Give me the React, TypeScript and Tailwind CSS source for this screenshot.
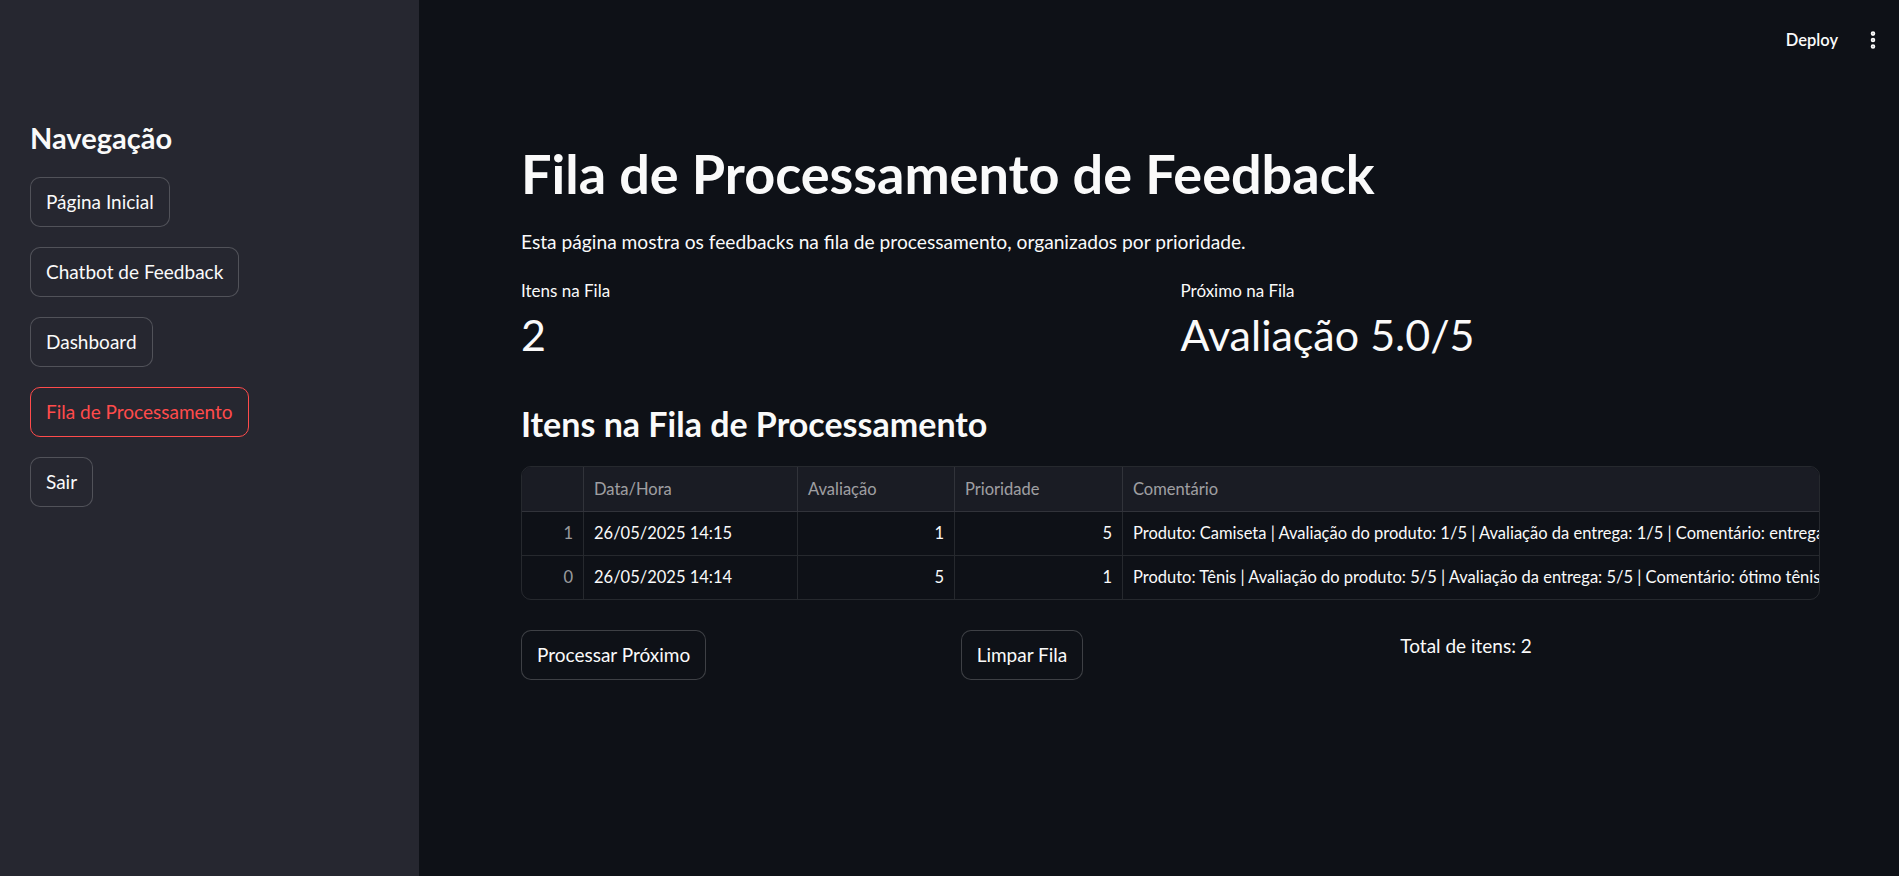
import { EllipsisVertical } from "lucide-react";

const navItems = ["Página Inicial", "Chatbot de Feedback", "Dashboard", "Fila de Processamento", "Sair"];

const rows = [
    {
        idx: 1,
        date: "26/05/2025 14:15",
        rating: 1,
        priority: 5,
        comment: "Produto: Camiseta | Avaliação do produto: 1/5 | Avaliação da entrega: 1/5 | Comentário: entrega atrasada e produto com defeito",
    },
    {
        idx: 0,
        date: "26/05/2025 14:14",
        rating: 5,
        priority: 1,
        comment: "Produto: Tênis | Avaliação do produto: 5/5 | Avaliação da entrega: 5/5 | Comentário: ótimo tênis, chegou rápido",
    },
];

const App: React.FC = () => {
    return (
        <div className="flex h-screen w-full overflow-hidden bg-[#0e1117] text-[#fafafa] font-['Lato','Noto_Sans',sans-serif]">
            <aside className="w-[419px] shrink-0 bg-[#262730] px-[30px] pt-[118px]">
                <p className="text-[29px] leading-[40px] font-bold">Navegação</p>
                <div className="flex flex-col items-start gap-[20px] mt-[19px]">
                    {navItems.map((item) => {
                        const active = item === "Fila de Processamento";
                        return (
                            <button
                                key={item}
                                className={
                                    active
                                        ? "h-[50px] px-[15px] rounded-[10px] border border-[#ff4b4b] text-[#ff4b4b] text-[19px] bg-[#262730]"
                                        : "h-[50px] px-[15px] rounded-[10px] border border-[#ffffff33] text-[19px] bg-[#262730]"
                                }
                            >
                                {item}
                            </button>
                        );
                    })}
                </div>
            </aside>

            <main className="flex-1 flex flex-col">
                <div className="h-[80px] flex items-center justify-end pr-[15px] gap-[24px]">
                    <span className="text-[16.5px] font-semibold">Deploy</span>
                    <EllipsisVertical size={22} strokeWidth={3} />
                </div>

                <div className="pl-[102px] pr-[79px]">
                    <h1 className="text-[54px] leading-[66px] font-bold mt-[61px]">Fila de Processamento de Feedback</h1>
                    <p className="text-[19.2px] leading-[30px] mt-[20px]">
                        Esta página mostra os feedbacks na fila de processamento, organizados por prioridade.
                    </p>

                    <div className="grid grid-cols-2 gap-[20px] mt-[22px]">
                        <div>
                            <p className="text-[17px] leading-[24px]">Itens na Fila</p>
                            <p className="text-[43px] leading-[56px] mt-[4px]">2</p>
                        </div>
                        <div>
                            <p className="text-[17px] leading-[24px]">Próximo na Fila</p>
                            <p className="text-[43px] leading-[56px] mt-[4px]">Avaliação 5.0/5</p>
                        </div>
                    </div>

                    <h3 className="text-[34px] leading-[44px] font-bold mt-[39px]">Itens na Fila de Processamento</h3>

                    <div className="mt-[20px] rounded-[10px] border border-[#ffffff1a] overflow-hidden text-[16.5px]">
                        <div className="grid grid-cols-[62px_214px_157px_168px_1fr] h-[45px] bg-[#1a1c24] text-[#fafafa99] border-b border-[#ffffff1a]">
                            <div className="border-r border-[#ffffff1a]" />
                            <div className="flex items-center px-[10px] border-r border-[#ffffff1a]">Data/Hora</div>
                            <div className="flex items-center px-[10px] border-r border-[#ffffff1a]">Avaliação</div>
                            <div className="flex items-center px-[10px] border-r border-[#ffffff1a]">Prioridade</div>
                            <div className="flex items-center px-[10px]">Comentário</div>
                        </div>
                        {rows.map((r, i) => (
                            <div
                                key={r.idx}
                                className={
                                    i === 0
                                        ? "grid grid-cols-[62px_214px_157px_168px_1fr] h-[44px] border-b border-[#ffffff1a]"
                                        : "grid grid-cols-[62px_214px_157px_168px_1fr] h-[43px]"
                                }
                            >
                                <div className="flex items-center justify-end px-[10px] text-[#fafafa99] border-r border-[#ffffff1a]">{r.idx}</div>
                                <div className="flex items-center px-[10px] border-r border-[#ffffff1a]">{r.date}</div>
                                <div className="flex items-center justify-end px-[10px] border-r border-[#ffffff1a]">{r.rating}</div>
                                <div className="flex items-center justify-end px-[10px] border-r border-[#ffffff1a]">{r.priority}</div>
                                <div className="flex items-center px-[10px] whitespace-nowrap overflow-hidden">{r.comment}</div>
                            </div>
                        ))}
                    </div>

                    <div className="grid grid-cols-3 gap-[20px] mt-[30px]">
                        <div>
                            <button className="h-[50px] px-[15px] rounded-[10px] border border-[#ffffff33] text-[19px] bg-[#0e1117]">
                                Processar Próximo
                            </button>
                        </div>
                        <div>
                            <button className="h-[50px] px-[15px] rounded-[10px] border border-[#ffffff33] text-[19px] bg-[#0e1117]">
                                Limpar Fila
                            </button>
                        </div>
                        <p className="text-[19px] leading-[32px]">Total de itens: 2</p>
                    </div>
                </div>
            </main>
        </div>
    );
};

export default App;
